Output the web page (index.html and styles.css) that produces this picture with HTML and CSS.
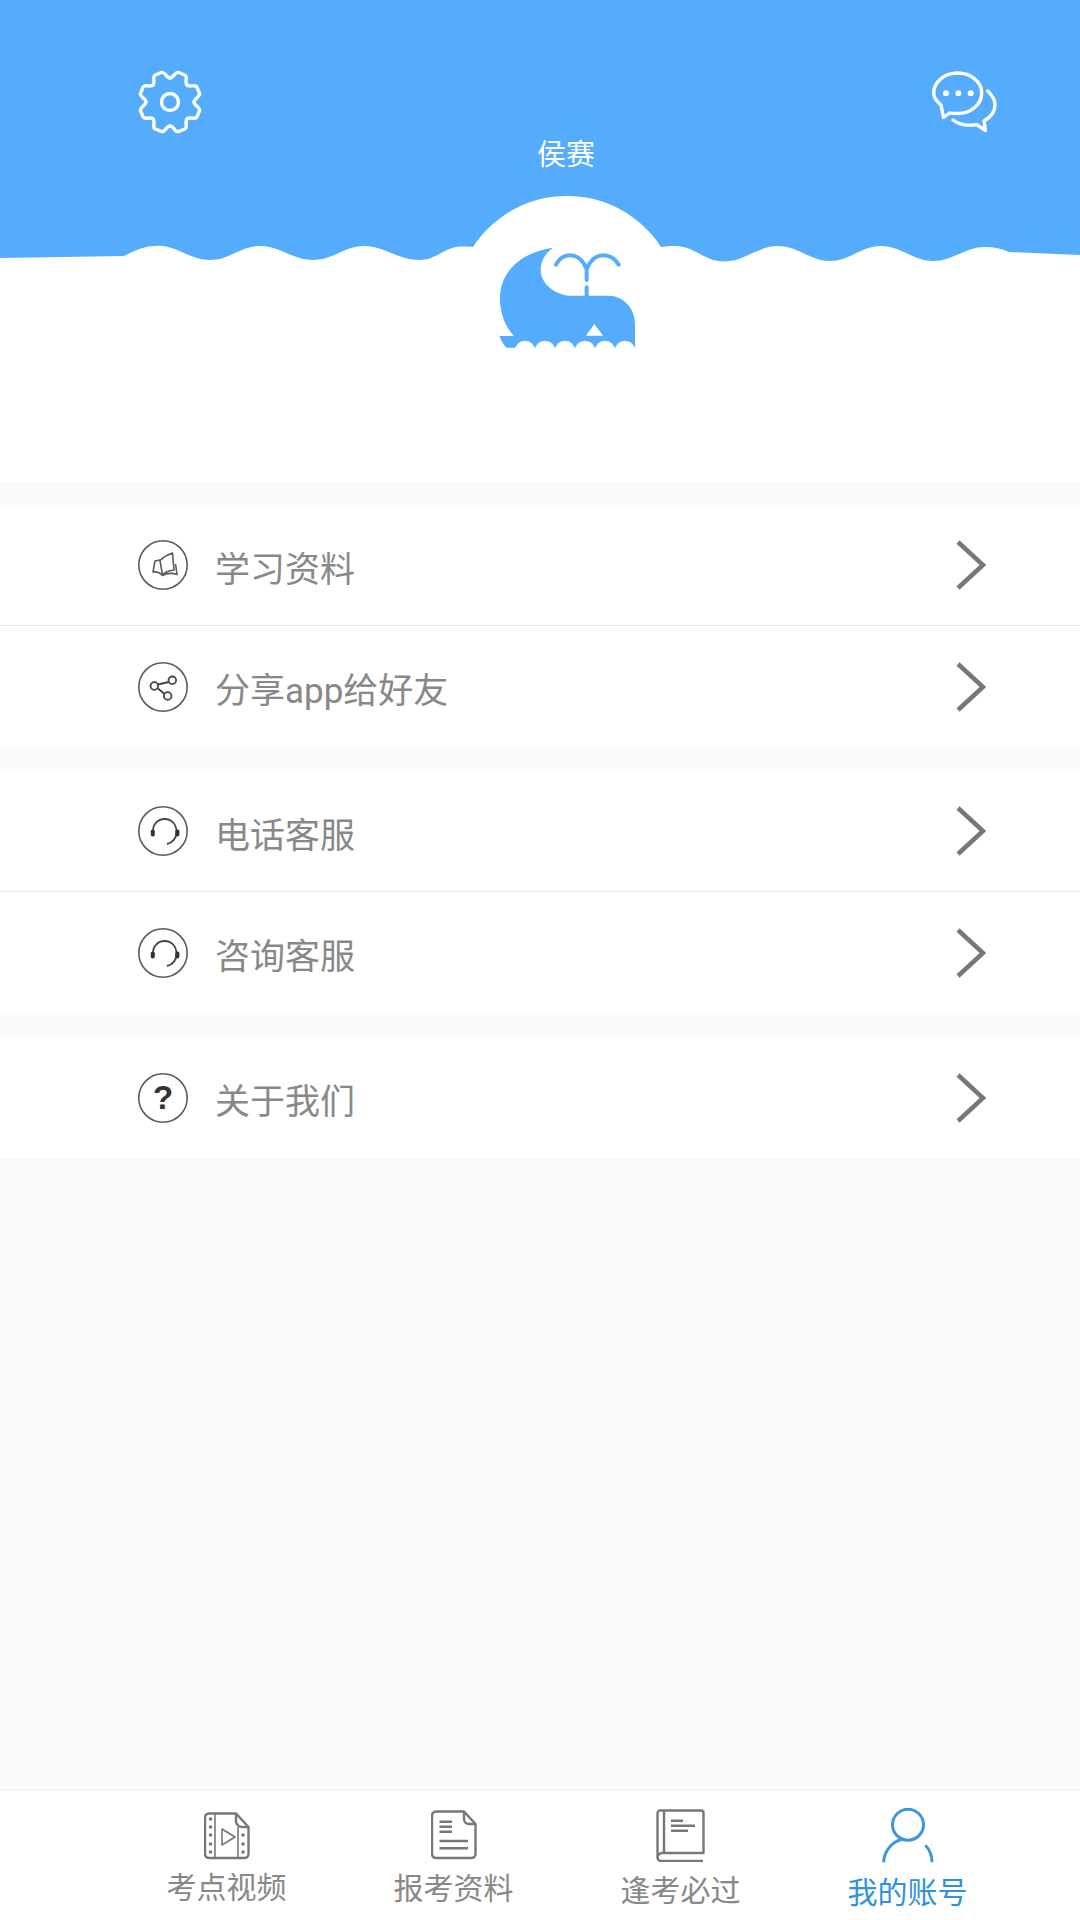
FILE: index.html
```html
<!DOCTYPE html>
<html lang="zh-CN">

<head>
    <meta charset="UTF-8">
    <meta name="viewport" content="width=device-width, initial-scale=1.0">
    <title>我的账号</title>
    <link rel="stylesheet" href="styles.css">
</head>

<body>
    <div class="page">
        <header class="hero">
            <svg class="hero-art" viewBox="0 0 1080 481" aria-hidden="true">
                <path class="sea" d="M0 0H1080V255L1009 252C1000 248 993 247 985 247C965 247 953 261 933 261C913 261 901 246 881 246C861 246 850 261 830 261C810 261 798 246 778 246C758 246 744 261.5 724 261.5C704 261.5 695 246 675 246C670 246 665 246.5 661 247A112 112 0 0 0 473 247C470 246.5 466 246.5 461 246.5C445 246.5 437 260 419 260C399 260 384 246 364 246C344 246 333 260 313 260C293 260 280 246 260 246C240 246 230 260 210 260C190 260 178 245.7 158 245.7C145 245.7 135 250 124 256L0 258Z" />
                <g transform="translate(440 180) scale(0.3333)">
                    <path class="sea" d="M340 203C250 215 180 270 180 355C180 400 195 440 222 468H178C184 485 192 495 200 503H585V430C585 385 550 347 505 347H385C335 340 300 305 302 265C303 240 318 218 340 203Z" />
                    <g class="whale-waves">
                        <circle cx="255" cy="512" r="30" />
                        <circle cx="315" cy="512" r="30" />
                        <circle cx="375" cy="512" r="30" />
                        <circle cx="435" cy="512" r="30" />
                        <circle cx="495" cy="512" r="30" />
                        <circle cx="555" cy="512" r="30" />
                    </g>
                    <path class="whale-waves" d="M463 432L489 467H438Z" />
                    <path class="spout" d="M348 254C358 235 372 226 390 226C415 226 432 245 440 268C448 245 465 226 490 226C508 226 524 235 536 254M440 268V300M440 322V347" />
                </g>
            </svg>

            <div class="hero-top">
                <svg class="gear" viewBox="0 0 64 64" aria-hidden="true">
                    <g transform="translate(32 32)">
                        <path id="tooth" d="M-9.2-22.2C-5.5-23.8-7.2-30.6-3.2-30.6L3.2-30.6C7.2-30.6 5.5-23.8 9.2-22.2" transform="rotate(22.5)" />
                        <use href="#tooth" transform="rotate(45)" />
                        <use href="#tooth" transform="rotate(90)" />
                        <use href="#tooth" transform="rotate(135)" />
                        <use href="#tooth" transform="rotate(180)" />
                        <use href="#tooth" transform="rotate(225)" />
                        <use href="#tooth" transform="rotate(270)" />
                        <use href="#tooth" transform="rotate(315)" />
                        <circle r="8.5" />
                    </g>
                </svg>
                <svg class="chat" viewBox="0 0 70 66" aria-hidden="true">
                    <path d="M11 35C6 31 3.7 27.5 3.7 23C3.7 12 14.5 3 27.7 3C41 3 51.7 12 51.7 23C51.7 34.5 41 43.5 27.7 43.5C24.5 43.5 22 43.2 19.5 43L13.5 47.5Z" />
                    <path d="M57.7 21C62 25 65 30 65 35C65 41 61 47 54 51L55.5 60.5L46.5 54.5C38 56 29 54.5 23 50" />
                    <circle class="dot" cx="16" cy="23.3" r="3" />
                    <circle class="dot" cx="28.3" cy="23.3" r="3" />
                    <circle class="dot" cx="40.7" cy="23.3" r="3" />
                </svg>
            </div>
            <div class="hero-name">侯赛</div>
        </header>

        <main class="menu">
            <section class="group">
                <div class="row">
                    <svg class="row-icon" viewBox="0 0 52 52" aria-hidden="true">
                        <circle cx="26" cy="26" r="24.2" />
                        <path d="M23 21.5C27 17.5 31 15.5 35.5 14L37 31C33 31.5 28 33 25.5 36M23 21.5L25.5 36M23 21L18 22L16 33C19 32.5 23 33.5 25.5 36.5C29 34.5 34 33.5 40 35.5L38.5 25" />
                    </svg>
                    <span class="row-label">学习资料</span>
                    <svg class="chevron" viewBox="0 0 31 50" aria-hidden="true"><path d="M3 2L28 25L3 48" /></svg>
                </div>
                <div class="row">
                    <svg class="row-icon" viewBox="0 0 52 52" aria-hidden="true">
                        <circle cx="26" cy="26" r="24.2" />
                        <path class="thick" d="M31.8 21L20.8 23.5M21 27.5L27.5 33" />
                        <circle class="thick" cx="35.3" cy="19.3" r="3.8" />
                        <circle class="thick" cx="17.3" cy="25" r="3.8" />
                        <circle class="thick" cx="30.7" cy="35" r="3.8" />
                    </svg>
                    <span class="row-label">分享app给好友</span>
                    <svg class="chevron" viewBox="0 0 31 50" aria-hidden="true"><path d="M3 2L28 25L3 48" /></svg>
                </div>
            </section>

            <section class="group">
                <div class="row">
                    <svg class="row-icon" viewBox="0 0 52 52" aria-hidden="true">
                        <circle cx="26" cy="26" r="24.2" />
                        <path class="thick" d="M16 26C16 19 21 14 27.5 14C34.5 14 39.5 19 39.5 27C39.5 33 35.5 38 30 39" />
                        <rect class="pad" x="13.8" y="24.5" width="4" height="7" rx="1.8" />
                        <rect class="pad" x="38.4" y="24.5" width="4" height="7" rx="1.8" />
                    </svg>
                    <span class="row-label">电话客服</span>
                    <svg class="chevron" viewBox="0 0 31 50" aria-hidden="true"><path d="M3 2L28 25L3 48" /></svg>
                </div>
                <div class="row">
                    <svg class="row-icon" viewBox="0 0 52 52" aria-hidden="true">
                        <circle cx="26" cy="26" r="24.2" />
                        <path class="thick" d="M16 26C16 19 21 14 27.5 14C34.5 14 39.5 19 39.5 27C39.5 33 35.5 38 30 39" />
                        <rect class="pad" x="13.8" y="24.5" width="4" height="7" rx="1.8" />
                        <rect class="pad" x="38.4" y="24.5" width="4" height="7" rx="1.8" />
                    </svg>
                    <span class="row-label">咨询客服</span>
                    <svg class="chevron" viewBox="0 0 31 50" aria-hidden="true"><path d="M3 2L28 25L3 48" /></svg>
                </div>
            </section>

            <section class="group">
                <div class="row">
                    <svg class="row-icon" viewBox="0 0 52 52" aria-hidden="true">
                        <circle cx="26" cy="26" r="24.2" />
                        <text class="question" x="26" y="37" text-anchor="middle">?</text>
                    </svg>
                    <span class="row-label">关于我们</span>
                    <svg class="chevron" viewBox="0 0 31 50" aria-hidden="true"><path d="M3 2L28 25L3 48" /></svg>
                </div>
            </section>
        </main>

        <nav class="tabs">
            <div class="tab">
                <svg class="tab-icon icon-video" viewBox="0 0 46 48" aria-hidden="true">
                    <path d="M5 1.5H32L44.5 15V42A4 4 0 0 1 40.5 46H5A4 4 0 0 1 1 42V5.5A4 4 0 0 1 5 1.5Z" />
                    <path d="M32 1.5V9A6 6 0 0 0 38 15H44.5" />
                    <path class="thin" d="M11 2V46M34 15V46" />
                    <path class="thin" d="M18 17L31 25L18 33Z" />
                    <g class="film">
                        <circle cx="6.5" cy="7" r="1.8" />
                        <circle cx="6.5" cy="15" r="1.8" />
                        <circle cx="6.5" cy="23" r="1.8" />
                        <circle cx="6.5" cy="32" r="1.8" />
                        <circle cx="6.5" cy="40" r="1.8" />
                        <circle cx="39" cy="23" r="1.8" />
                        <circle cx="39" cy="32" r="1.8" />
                        <circle cx="39" cy="40" r="1.8" />
                    </g>
                </svg>
                <span class="tab-label">考点视频</span>
            </div>
            <div class="tab">
                <svg class="tab-icon icon-doc" viewBox="0 0 46 50" aria-hidden="true">
                    <path d="M5 1.5H33L44.5 14V44A4 4 0 0 1 40.5 48H5A4 4 0 0 1 1 44V5.5A4 4 0 0 1 5 1.5Z" />
                    <path d="M33 1.5V9A5 5 0 0 0 38 14H44.5" />
                    <path d="M8.5 11.7H21M8.5 16.7H21M8.5 21.7H21M8.5 31H37M8.5 38.3H37" />
                </svg>
                <span class="tab-label">报考资料</span>
            </div>
            <div class="tab">
                <svg class="tab-icon icon-book" viewBox="0 0 49 53" aria-hidden="true">
                    <path d="M4 1.5H45A2.5 2.5 0 0 1 47.5 4V44H6A4.5 4.5 0 0 0 1.5 48.5A3.5 3.5 0 0 0 5 52H47M1.5 48.5V4A2.5 2.5 0 0 1 4 1.5M8 1.5V44" />
                    <path d="M15 11.7H27M15 16.7H39M15 21.7H32" />
                </svg>
                <span class="tab-label">逢考必过</span>
            </div>
            <div class="tab tab-active">
                <svg class="tab-icon icon-user" viewBox="0 0 52 55" aria-hidden="true">
                    <circle cx="26" cy="16.7" r="15.5" />
                    <path d="M1.7 54.3C2 43 10 33.5 21 31M43.3 37.3C47.5 41.5 50 47.5 50 54.3" />
                </svg>
                <span class="tab-label">我的账号</span>
            </div>
        </nav>
    </div>
</body>

</html>
```

FILE: styles.css
```css
* {
    box-sizing: border-box;
}

body {
    margin: 0;
    background-color: #fafafa;
    font-family: Roboto, "Noto Sans CJK SC", "Noto Sans", sans-serif;
}

.page {
    display: flex;
    flex-direction: column;
    height: 1920px;
}

/* top banner */
.hero {
    position: relative;
    height: 482px;
    background-color: #fff;
}

.hero-art {
    position: absolute;
    top: 0;
    left: 0;
    width: 1080px;
    height: 481px;
}

.sea {
    fill: #55acfd;
}

.whale-waves {
    fill: #fff;
}

.spout {
    fill: none;
    stroke: #55acfd;
    stroke-width: 12;
    stroke-linecap: round;
}

.hero-top {
    position: relative;
    display: flex;
    justify-content: space-between;
    padding: 70px 80px 0 138px;
}

.gear,
.chat {
    fill: none;
    stroke: #fff;
    stroke-width: 3.4;
    stroke-linejoin: round;
    stroke-linecap: round;
}

.gear {
    width: 64px;
    height: 64px;
}

.chat {
    width: 70px;
    height: 66px;
}

.dot {
    fill: #fff;
    stroke: none;
}

.hero-name {
    position: relative;
    margin-top: 1px;
    padding-left: 52px;
    font-size: 29px;
    line-height: 36px;
    text-align: center;
    color: #fff;
}

/* menu list */
.menu {
    flex: 1;
}

.group {
    margin-top: 23px;
    background-color: #fff;
}

.group + .group {
    margin-top: 24px;
}

.row {
    display: flex;
    align-items: center;
    height: 121px;
    padding: 0 94px 0 137px;
    border-bottom: 1px solid #e8e8e8;
}

.row:last-child {
    border-bottom: none;
}

.row-icon {
    flex: none;
    width: 52px;
    height: 52px;
    fill: none;
    stroke: #5c5c5c;
    stroke-width: 1.6;
    stroke-linejoin: round;
}

.row-icon .thick {
    stroke: #444;
    stroke-width: 1.8;
}

.row-icon .pad {
    fill: #333;
    stroke: none;
}

.row-icon .question {
    font-family: "Liberation Sans", sans-serif;
    font-size: 33px;
    font-weight: bold;
    fill: #333;
    stroke: none;
}

.row-label {
    flex: 1;
    margin-left: 26px;
    padding-top: 11px;
    font-size: 35px;
    line-height: 46px;
    color: #888;
}

.chevron {
    flex: none;
    width: 31px;
    height: 50px;
    fill: none;
    stroke: #777;
    stroke-width: 4.5;
}

/* bottom tabs */
.tabs {
    display: grid;
    grid-template-columns: repeat(4, 227px);
    height: 129px;
    padding-left: 113px;
    background-color: #fff;
    box-shadow: 0 -1px 3px rgba(0, 0, 0, 0.04);
}

.tab {
    display: flex;
    flex-direction: column;
    align-items: center;
}

.tab-icon {
    flex: none;
    fill: none;
    stroke: #777;
    stroke-width: 2.4;
    stroke-linejoin: round;
}

.tab-icon .thin {
    stroke-width: 1.6;
}

.tab-icon .film {
    fill: #777;
    stroke: none;
}

.icon-video {
    width: 46px;
    height: 48px;
    margin-top: 21px;
    margin-bottom: 13px;
}

.icon-doc {
    width: 46px;
    height: 50px;
    margin-top: 19px;
    margin-bottom: 14px;
}

.icon-book {
    width: 49px;
    height: 53px;
    margin-top: 18px;
    margin-bottom: 14px;
}

.icon-user {
    width: 52px;
    height: 55px;
    margin-top: 17px;
    margin-bottom: 15px;
    stroke: #3a97dc;
    stroke-width: 3;
}

.tab-label {
    font-size: 30px;
    line-height: 30px;
    color: #888;
}

.tab-active .tab-label {
    color: #2f92dc;
}
```
